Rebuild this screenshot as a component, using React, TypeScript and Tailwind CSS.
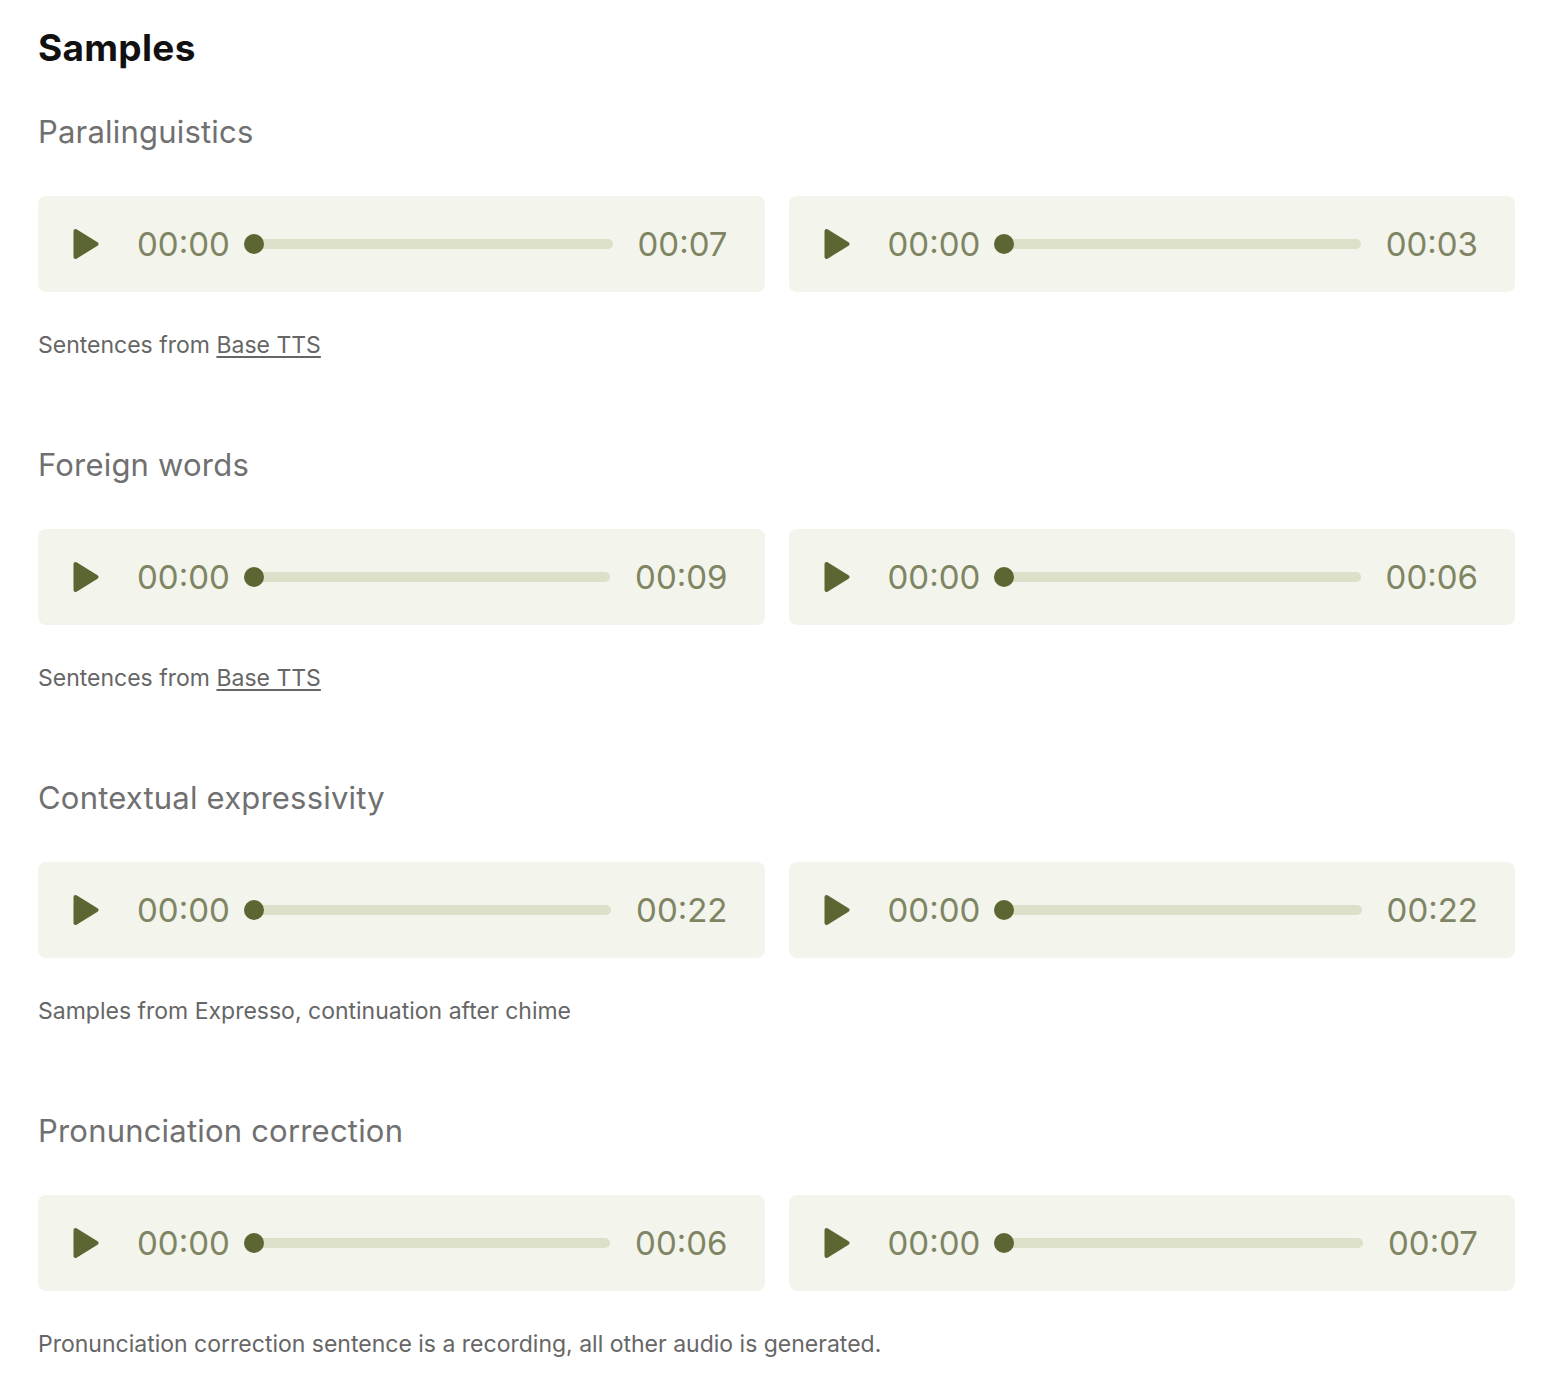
import React from "react";

type Section = {
  title: string;
  durations: [string, string];
  caption: React.ReactNode;
};

const sections: Section[] = [
  {
    title: "Paralinguistics",
    durations: ["00:07", "00:03"],
    caption: (
      <>
        Sentences from <span className="underline underline-offset-[3px]">Base TTS</span>
      </>
    ),
  },
  {
    title: "Foreign words",
    durations: ["00:09", "00:06"],
    caption: (
      <>
        Sentences from <span className="underline underline-offset-[3px]">Base TTS</span>
      </>
    ),
  },
  {
    title: "Contextual expressivity",
    durations: ["00:22", "00:22"],
    caption: <>Samples from Expresso, continuation after chime</>,
  },
  {
    title: "Pronunciation correction",
    durations: ["00:06", "00:07"],
    caption: <>Pronunciation correction sentence is a recording, all other audio is generated.</>,
  },
];

function PlayIcon() {
  return (
    <svg width="26" height="32" viewBox="0 0 26 32" className="shrink-0">
      <path
        d="M2.5 3 L23.5 16 L2.5 29 Z"
        fill="#5c6633"
        stroke="#5c6633"
        strokeWidth="4"
        strokeLinejoin="round"
      />
    </svg>
  );
}

function Player({ duration }: { duration: string }) {
  return (
    <div className="flex h-[96px] items-center rounded-[8px] bg-[#f3f4ec] pl-[35px] pr-[37px]">
      <PlayIcon />
      <span className="ml-[38px] text-[33px] leading-none text-[#7f8563]">00:00</span>
      <div className="relative ml-[14px] mr-[25px] flex h-[20px] flex-1 items-center">
        <div className="h-[10px] w-full rounded-full bg-[#dde0c8]" />
        <div className="absolute left-0 top-0 h-[20px] w-[20px] rounded-full bg-[#5c6633]" />
      </div>
      <span className="text-[33px] leading-none text-[#7f8563]">{duration}</span>
    </div>
  );
}

export default function App() {
  return (
    <div
      className="min-h-screen bg-white px-[38px] pt-[26px]"
      style={{ fontFamily: "Inter, 'Noto Sans', sans-serif" }}
    >
      <div className="w-[1477px]">
        <h1 className="text-[37px] font-bold leading-[44px] tracking-[0.3px] text-[#111111]">Samples</h1>
        <div className="mt-[42px] flex flex-col gap-[85px]">
          {sections.map((s) => (
            <section key={s.title}>
              <h2 className="text-[31px] leading-[40px] tracking-[0.2px] text-[#707070]">{s.title}</h2>
              <div className="mt-[44px] grid grid-cols-2 gap-[24px]">
                <Player duration={s.durations[0]} />
                <Player duration={s.durations[1]} />
              </div>
              <p className="mt-[38px] text-[23px] leading-[30px] text-[#666666]">{s.caption}</p>
            </section>
          ))}
        </div>
      </div>
    </div>
  );
}
